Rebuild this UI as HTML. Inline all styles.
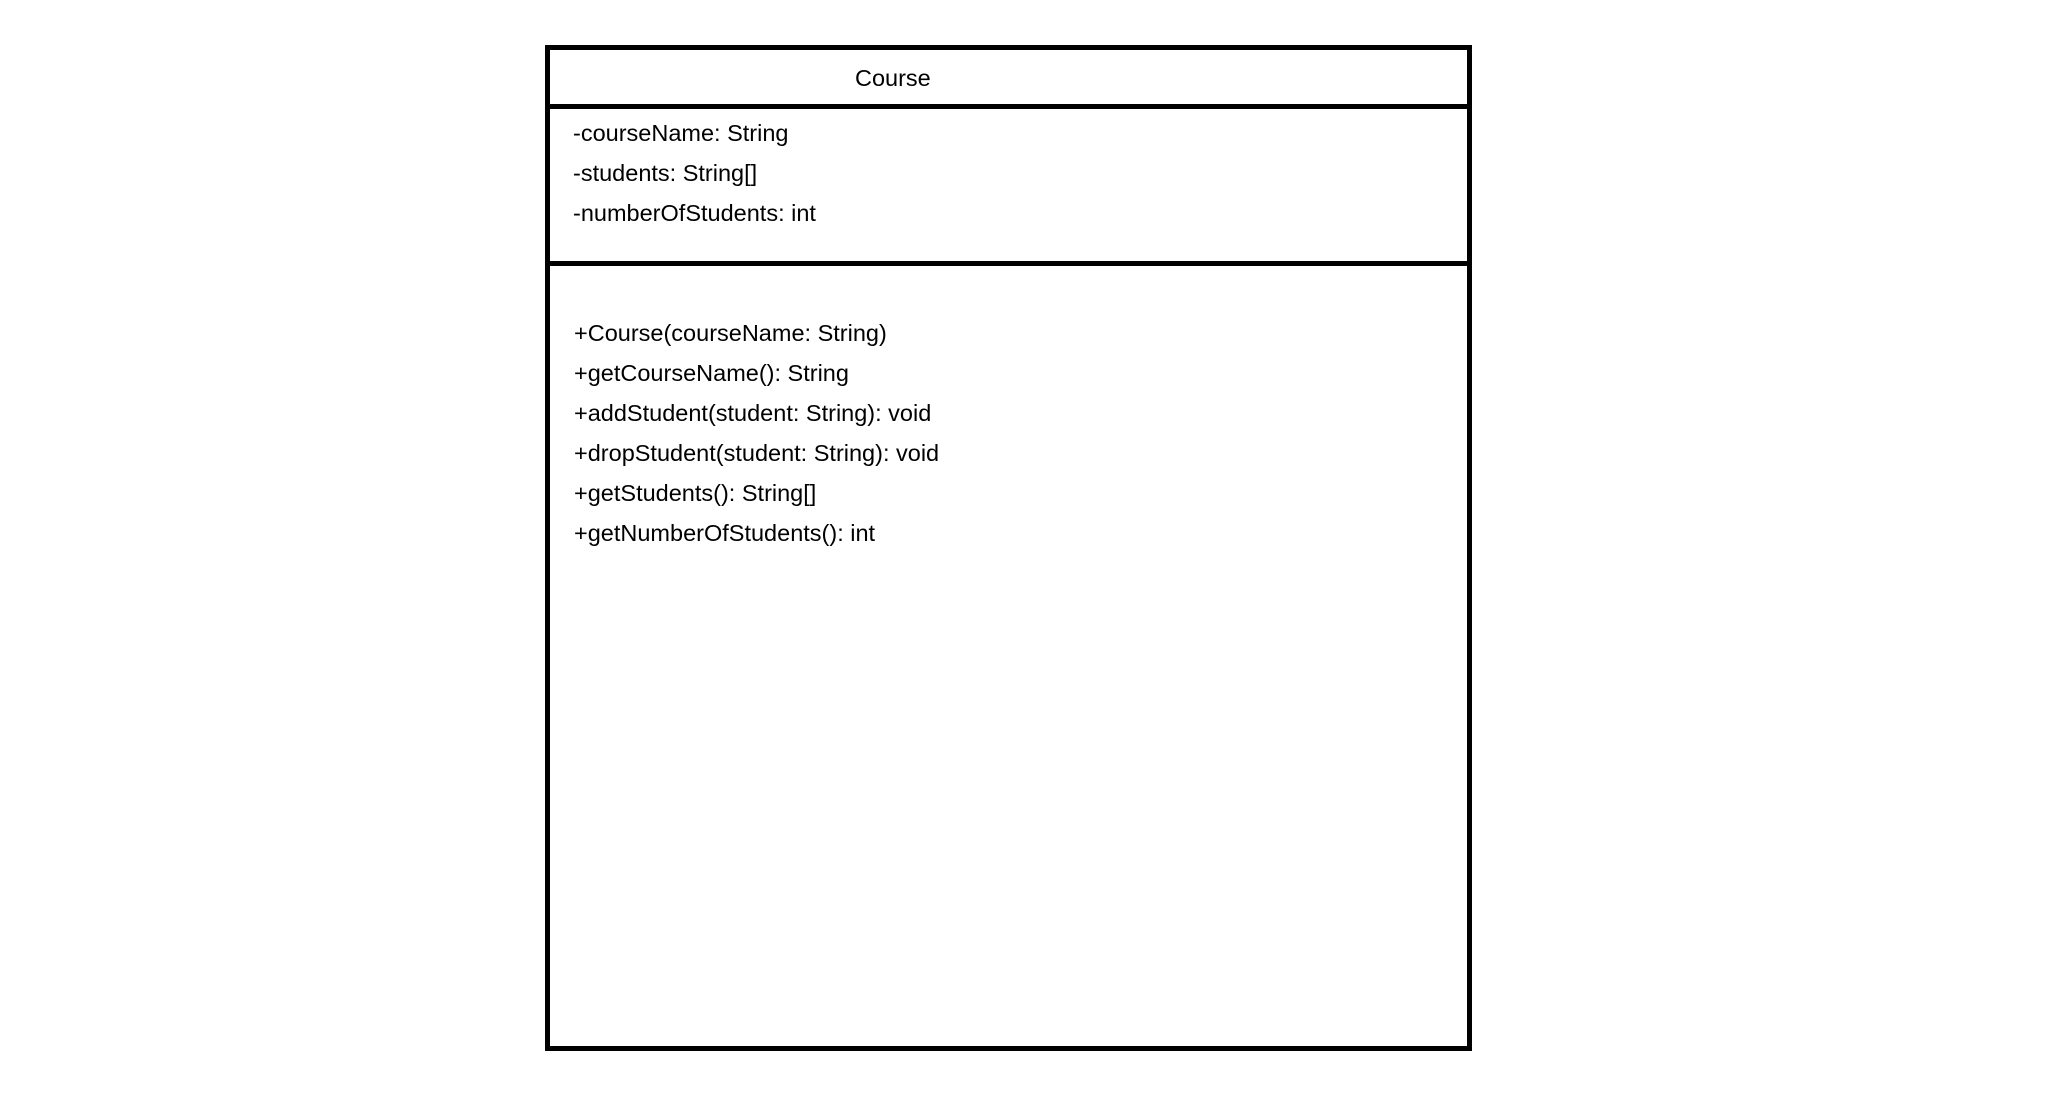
<!DOCTYPE html>
<html><head><meta charset="utf-8"><style>
html,body{margin:0;padding:0;background:#fff;width:2056px;height:1111px;overflow:hidden}
.l{position:absolute;background:#000}
.t{position:absolute;font-family:"Liberation Sans","DejaVu Sans",sans-serif;font-size:23.5px;color:#000;white-space:nowrap;line-height:1}
</style></head><body>
<div class="l" style="left:545px;top:45px;width:927px;height:5px"></div>
<div class="l" style="left:545px;top:1046px;width:927px;height:5px"></div>
<div class="l" style="left:545px;top:45px;width:5px;height:1006px"></div>
<div class="l" style="left:1467px;top:45px;width:5px;height:1006px"></div>
<div class="l" style="left:545px;top:104px;width:927px;height:5px"></div>
<div class="l" style="left:545px;top:261px;width:927px;height:5px"></div>
<div class="t" style="left:855px;top:67px">Course</div>
<div class="t" style="left:573px;top:122px">-courseName: String</div>
<div class="t" style="left:573px;top:162px">-students: String[]</div>
<div class="t" style="left:573px;top:202px">-numberOfStudents: int</div>
<div class="t" style="left:574px;top:322px">+Course(courseName: String)</div>
<div class="t" style="left:574px;top:362px">+getCourseName(): String</div>
<div class="t" style="left:574px;top:402px">+addStudent(student: String): void</div>
<div class="t" style="left:574px;top:442px">+dropStudent(student: String): void</div>
<div class="t" style="left:574px;top:482px">+getStudents(): String[]</div>
<div class="t" style="left:574px;top:522px">+getNumberOfStudents(): int</div>
</body></html>
